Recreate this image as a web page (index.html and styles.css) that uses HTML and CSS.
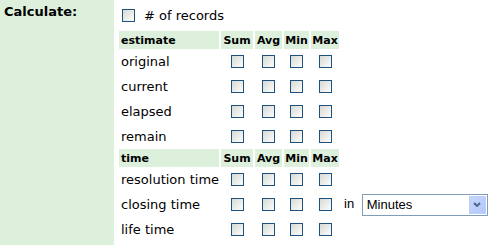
FILE: index.html
```html
<!DOCTYPE html>
<html lang="en">
<head>
    <meta charset="UTF-8">
    <meta name="viewport" content="width=device-width, initial-scale=1.0">
    <title>Calculate</title>
    <link rel="stylesheet" href="styles.css">
</head>
<body>
    <div class="field">
        <div class="field-label">Calculate:</div>
        <div class="field-body">
            <label class="count"><input type="checkbox" class="box"> # of records</label>

            <table class="calc">
                <tr class="head">
                    <th class="name">estimate</th><th class="c-sum">Sum</th><th class="c-avg">Avg</th><th class="c-min">Min</th><th class="c-max">Max</th>
                </tr>
                <tr>
                    <td class="name">original</td>
                    <td><input type="checkbox" class="box"></td><td><input type="checkbox" class="box"></td><td><input type="checkbox" class="box"></td><td><input type="checkbox" class="box"></td>
                </tr>
                <tr>
                    <td class="name">current</td>
                    <td><input type="checkbox" class="box"></td><td><input type="checkbox" class="box"></td><td><input type="checkbox" class="box"></td><td><input type="checkbox" class="box"></td>
                </tr>
                <tr>
                    <td class="name">elapsed</td>
                    <td><input type="checkbox" class="box"></td><td><input type="checkbox" class="box"></td><td><input type="checkbox" class="box"></td><td><input type="checkbox" class="box"></td>
                </tr>
                <tr>
                    <td class="name">remain</td>
                    <td><input type="checkbox" class="box"></td><td><input type="checkbox" class="box"></td><td><input type="checkbox" class="box"></td><td><input type="checkbox" class="box"></td>
                </tr>
                <tr class="head">
                    <th class="name">time</th><th>Sum</th><th>Avg</th><th>Min</th><th>Max</th>
                </tr>
                <tr>
                    <td class="name">resolution time</td>
                    <td><input type="checkbox" class="box"></td><td><input type="checkbox" class="box"></td><td><input type="checkbox" class="box"></td><td><input type="checkbox" class="box"></td>
                </tr>
                <tr>
                    <td class="name">closing time</td>
                    <td><input type="checkbox" class="box"></td><td><input type="checkbox" class="box"></td><td><input type="checkbox" class="box"></td><td><input type="checkbox" class="box"></td>
                    <td class="unit">
                        in
                        <div class="select">
                            <span class="select-text">Minutes</span>
                            <span class="select-btn">
                                <svg width="8" height="5" viewBox="0 0 8 5"><path d="M1 1 L4 4 L7 1" fill="none" stroke="#4d6185" stroke-width="1.8"/></svg>
                            </span>
                        </div>
                    </td>
                </tr>
                <tr>
                    <td class="name">life time</td>
                    <td><input type="checkbox" class="box"></td><td><input type="checkbox" class="box"></td><td><input type="checkbox" class="box"></td><td><input type="checkbox" class="box"></td>
                </tr>
            </table>
        </div>
    </div>
</body>
</html>
```

FILE: styles.css
```css
body {
    margin: 0;
    padding: 0;
    font-family: "DejaVu Sans", Verdana, sans-serif;
    font-size: 13px;
    color: #000;
    background: #fff;
}
.field {
    display: flex;
    min-height: 245px;
}
.field-label {
    width: 110px;
    padding: 4px 0 0 4px;
    background-color: #dcf0dc;
    font-weight: bold;
    line-height: 16px;
}
.field-body {
    padding: 8px 0 0 3px;
}
.count {
    display: flex;
    align-items: center;
    gap: 9px;
    height: 14px;
    margin-left: 5px;
    margin-bottom: 9px;
}
.box {
    appearance: none;
    -webkit-appearance: none;
    width: 13px;
    height: 13px;
    margin: 0;
    border: 1px solid #1c5180;
    background: linear-gradient(135deg, #d8d8d3, #fdfdfc);
    vertical-align: middle;
    display: block;
}
.calc {
    border-collapse: separate;
    border-spacing: 2px 0;
}
.calc th,
.calc td {
    padding: 0;
}
.calc .head th {
    height: 18px;
    background-color: #dcf0dc;
    font-size: 11px;
    font-weight: bold;
    text-align: center;
    white-space: nowrap;
}
.calc td {
    height: 25px;
}
.calc td .box {
    margin: 0 auto;
}
.calc .name,
.calc .head .name {
    width: 98px;
    padding-left: 2px;
    text-align: left;
    white-space: nowrap;
}
.c-sum { width: 32px; }
.c-avg { width: 27px; }
.c-min { width: 25px; }
.c-max { width: 28px; }
.calc .unit {
    padding-left: 3px;
    font-family: "Liberation Sans", Arial, sans-serif;
    white-space: nowrap;
}
.select {
    display: inline-flex;
    align-items: center;
    justify-content: space-between;
    vertical-align: middle;
    width: 124px;
    height: 20px;
    margin-left: 4px;
    border: 1px solid #7f9db9;
    background: #fff;
    font-family: "Liberation Sans", Arial, sans-serif;
    font-size: 13px;
}
.select-text {
    padding-left: 4px;
}
.select-btn {
    display: flex;
    align-items: center;
    justify-content: center;
    width: 15px;
    height: 16px;
    margin-right: 1px;
    border: 1px solid #bccefa;
    background: linear-gradient(135deg, #c6d6fc, #b2c8f8);
}
```
